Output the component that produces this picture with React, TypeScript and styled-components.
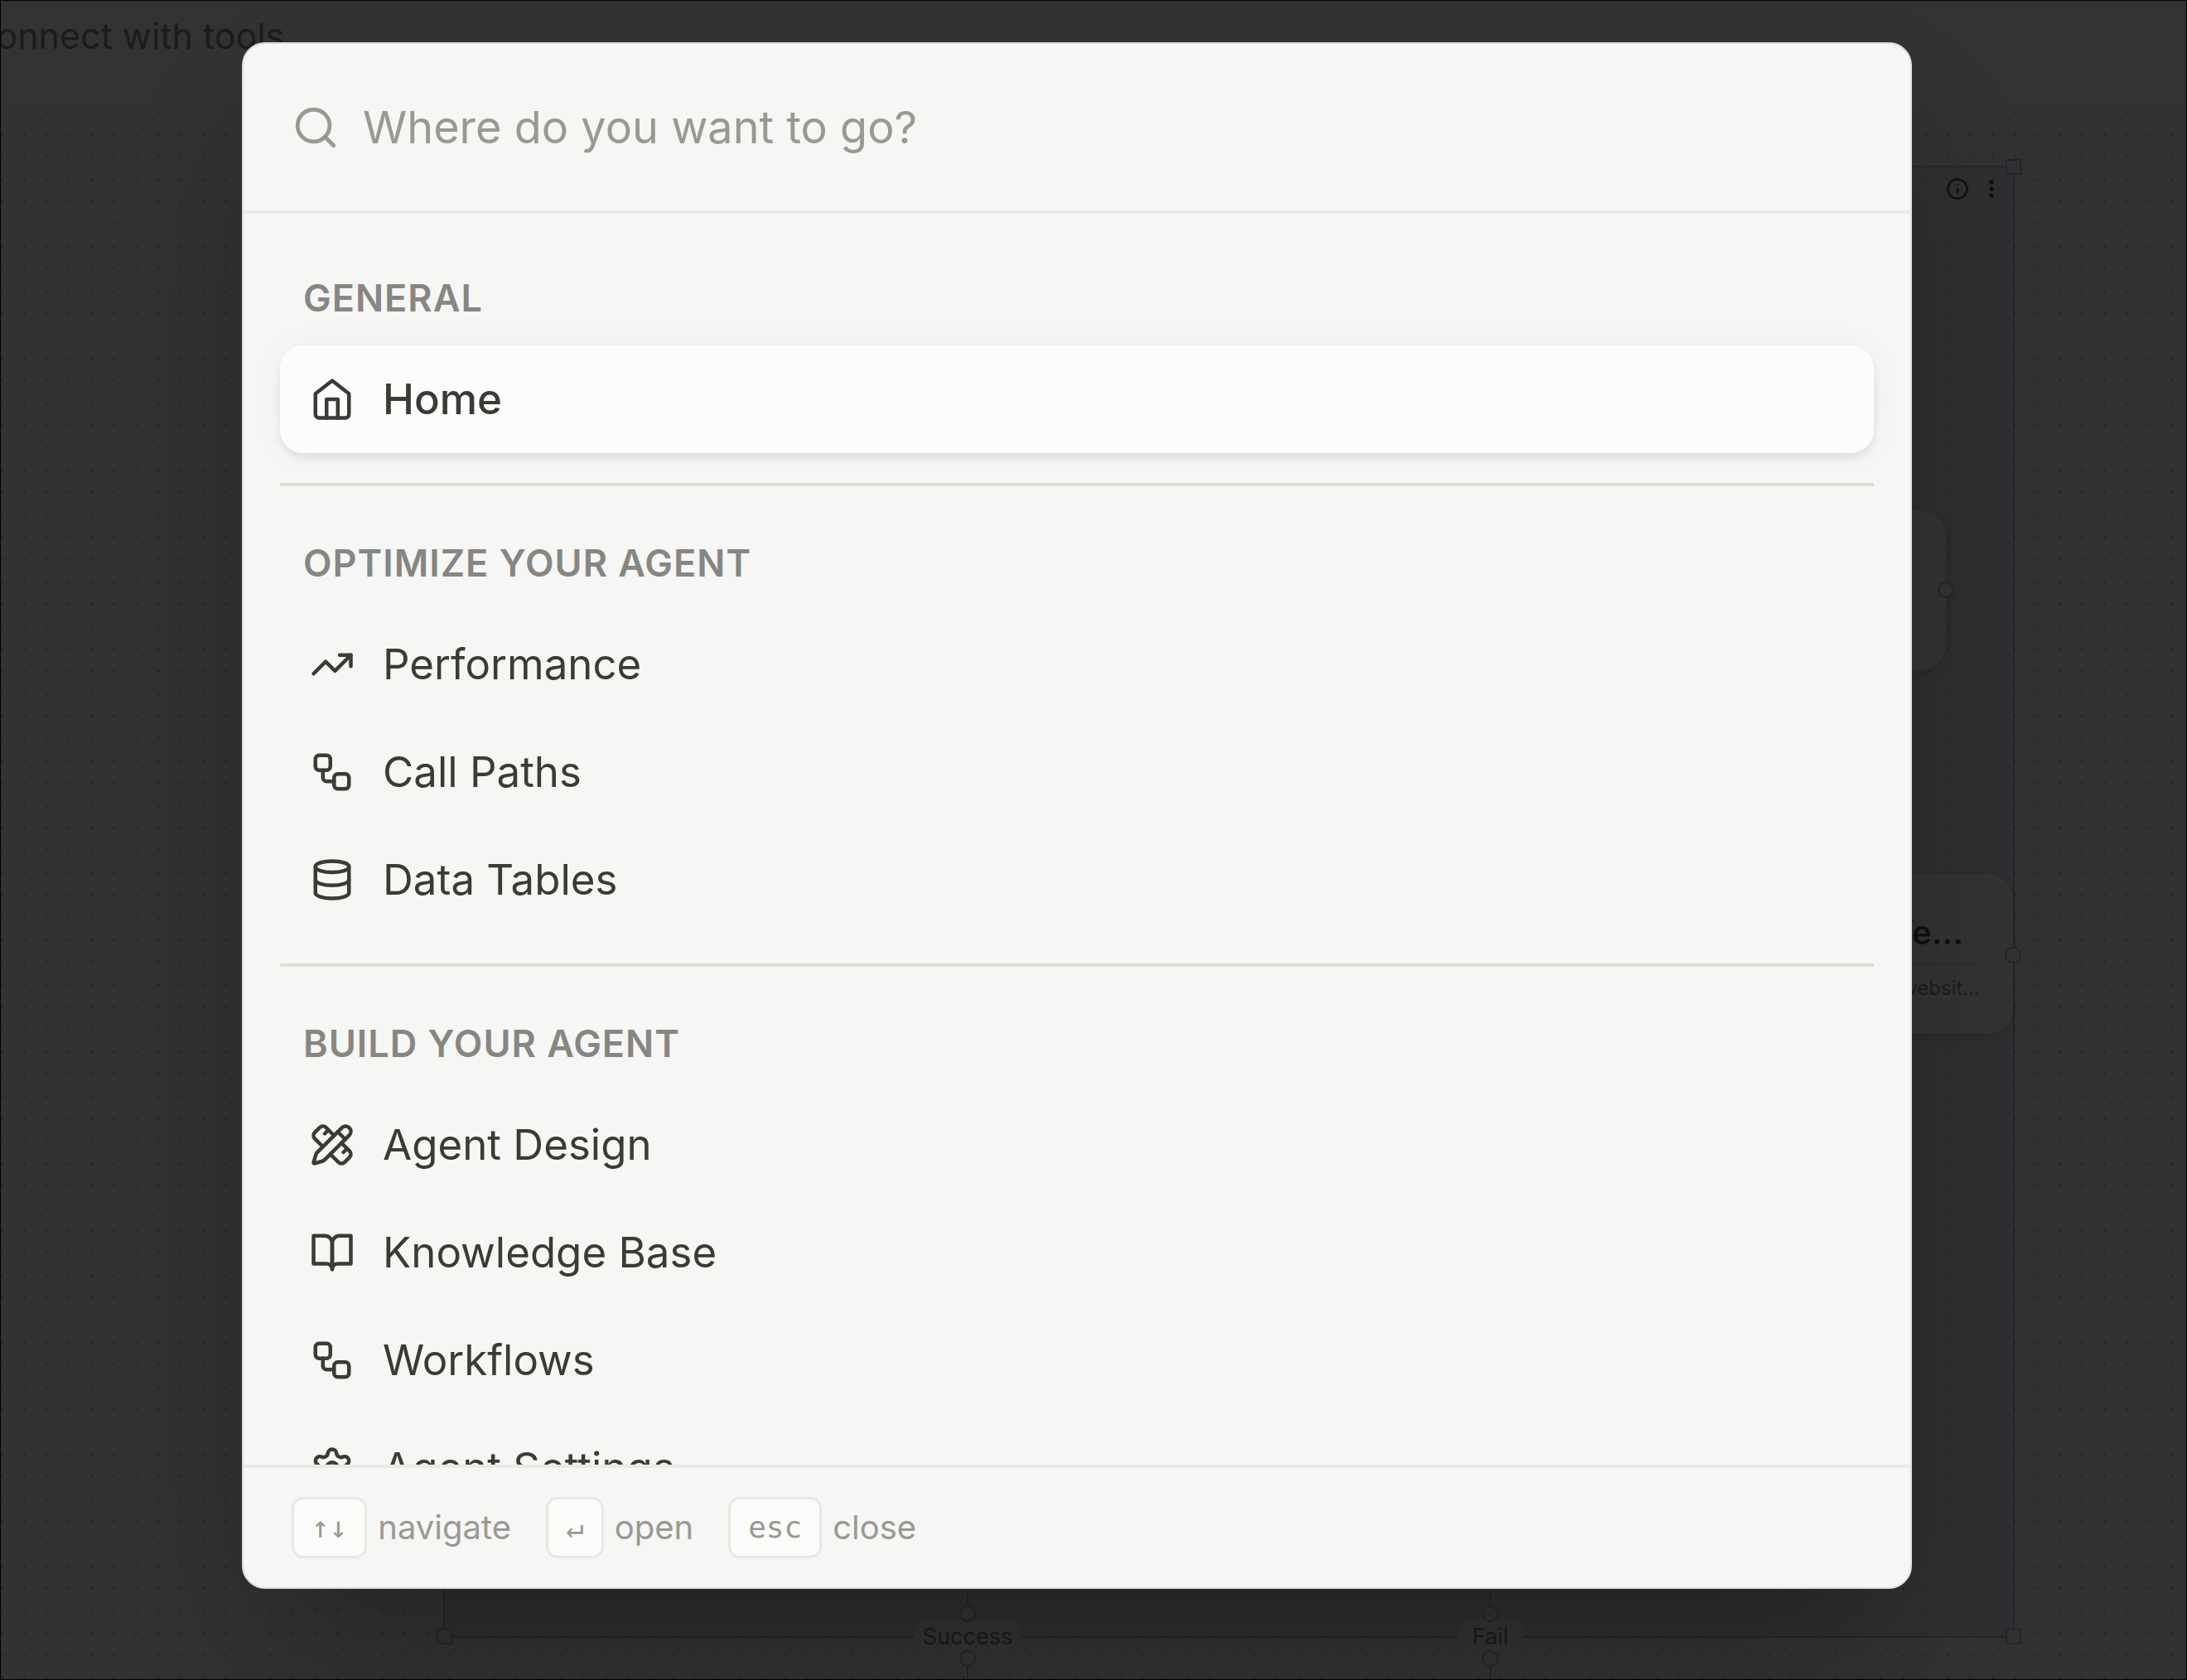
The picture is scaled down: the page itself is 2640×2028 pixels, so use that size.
import React from "react";
import styled, { createGlobalStyle, css } from "styled-components";
import { Database, Info, PencilRuler, Search, Settings, TrendingUp, Workflow } from "lucide-react";

const GlobalStyle = createGlobalStyle`
  *, *::before, *::after { box-sizing: border-box; }
  html, body { margin: 0; background: #323232; }
  body { font-family: Inter, "Liberation Sans", sans-serif; -webkit-font-smoothing: antialiased; }
  button, input { font: inherit; color: inherit; }
`;

const line = "#22262f";
const wire = "#242727";
const hairline = "#e9e9e7";

/* ---------- dimmed editor behind the palette ---------- */

const Screen = styled.div`
  position: relative;
  display: flex;
  flex-direction: column;
  height: 100vh;
  overflow: hidden;
  border: 1px solid #000;
`;

const TopBar = styled.header`
  display: flex;
  align-items: flex-start;
  height: 126px;
  padding-top: 16px;
  background: #333333;
  color: #1d1b1b;
  font-size: 43px;
  line-height: 52px;
  white-space: nowrap;
`;

const TopBarTitle = styled.span`
  margin-left: -37px;
`;

const Canvas = styled.main`
  position: relative;
  flex: 1;
  background-color: #323232;
  background-image: radial-gradient(circle at center, #272727 1px, transparent 2px);
  background-size: 27px 27px;
  background-position: 15px -5px;
`;

const GroupNode = styled.section`
  position: absolute;
  left: 534px;
  top: 73px;
  width: 1897px;
  height: 1777px;
  border: 2px solid ${line};
  background: rgba(46, 42, 46, 0.5);
`;

const ResizeHandle = styled.span<{ $v: "top" | "bottom"; $h: "left" | "right" }>`
  position: absolute;
  ${(p) => p.$v}: -10px;
  ${(p) => p.$h}: -10px;
  width: 19px;
  height: 19px;
  border: 2px solid ${line};
  background: #323232;
`;

const GroupTools = styled.div`
  display: flex;
  justify-content: flex-end;
  gap: 9px;
  padding: 10px 10px 0 0;
  color: #0f0f0f;
`;

const ToolButton = styled.button`
  display: grid;
  place-items: center;
  width: 32px;
  height: 32px;
  padding: 0;
  border: 0;
  background: none;
`;

const Card = styled.article<{ $x: number; $y: number }>`
  position: absolute;
  left: ${(p) => p.$x}px;
  top: ${(p) => p.$y}px;
  width: 540px;
  height: 193px;
  padding: 55px 38px 0;
  border-radius: 30px;
  background: #323332;
  box-shadow: 0 4px 10px rgba(0, 0, 0, 0.12);
  text-align: right;
`;

const CardTitle = styled.h3`
  margin: 0;
  padding: 0 22px 21px 0;
  border-bottom: 2px solid #2e2e2e;
  color: #111111;
  font-size: 40px;
  line-height: 32px;
  font-weight: 600;
`;

const CardText = styled.p`
  margin: 0;
  padding: 12px 2px 0 0;
  color: #1d1d1d;
  font-size: 24px;
  line-height: 32px;
`;

const Port = styled.span<{ $x: number; $y: number }>`
  position: absolute;
  left: ${(p) => p.$x - 10}px;
  top: ${(p) => p.$y - 10}px;
  width: 20px;
  height: 20px;
  border: 2px solid ${wire};
  border-radius: 50%;
  background: #323332;
`;

const Wire = styled.span<{ $x: number; $y: number; $h: number }>`
  position: absolute;
  left: ${(p) => p.$x - 1}px;
  top: ${(p) => p.$y}px;
  width: 2px;
  height: ${(p) => p.$h}px;
  background: ${wire};
`;

const ExitLabel = styled.span<{ $x: number; $y: number }>`
  position: absolute;
  left: ${(p) => p.$x}px;
  top: ${(p) => p.$y}px;
  transform: translate(-50%, -50%);
  min-width: 80px;
  padding: 0 10px;
  border-radius: 16px;
  background: #313231;
  color: #1a1a1a;
  font-size: 27px;
  line-height: 44px;
  text-align: center;
`;

/* ---------- command palette ---------- */

const Overlay = styled.div`
  position: absolute;
  inset: -1px;
  display: flex;
  padding: 51px 332px 110px 292px;
`;

const Palette = styled.div`
  display: flex;
  flex-direction: column;
  flex: 1;
  min-width: 0;
  overflow: hidden;
  border: 2px solid #dedcd8;
  border-radius: 28px;
  background: #f6f6f4;
  box-shadow: 0 86px 172px -42px rgba(0, 0, 0, 0.3);
`;

const SearchRow = styled.label`
  display: flex;
  align-items: center;
  gap: 28px;
  padding: 66px 58px 65px;
  border-bottom: 4px solid ${hairline};
  color: #999993;
`;

const SearchInput = styled.input`
  flex: 1;
  height: 70px;
  padding: 0;
  border: 0;
  outline: 0;
  background: none;
  color: #3d3a35;
  font-size: 54px;
  line-height: 70px;

  &::placeholder { color: #999993; opacity: 1; }
`;

const List = styled.nav`
  flex: 1;
  min-height: 0;
  overflow-y: auto;
  scrollbar-width: none;
  padding: 9px 0;
`;

const Group = styled.section`
  overflow: hidden;
  padding: 14px 44px;
  margin: 22px 0;
`;

const Heading = styled.h2`
  margin: 0;
  padding: 27px 28px;
  color: #868683;
  font-size: 45px;
  line-height: 60px;
  font-weight: 600;
  letter-spacing: 1px;
  text-transform: uppercase;
`;

const Divider = styled.hr`
  height: 4px;
  margin: 0 44px;
  border: 0;
  background: #dfddd6;
`;

const Item = styled.button<{ $active?: boolean }>`
  display: flex;
  align-items: center;
  gap: 34px;
  width: 100%;
  height: 130px;
  padding: 0 36px;
  border: 0;
  border-radius: 28px;
  background: none;
  color: #3d3a35;
  font-size: 51px;
  line-height: 64px;
  text-align: left;

  ${(p) =>
    p.$active &&
    css`
      background: #fcfcfc;
      font-weight: 500;
      box-shadow: 0 6px 10px rgba(0, 0, 0, 0.08), 0 2px 40px rgba(0, 0, 0, 0.04);
    `}
`;

const Footer = styled.footer`
  display: flex;
  align-items: center;
  gap: 42px;
  padding: 35px 58px;
  border-top: 4px solid ${hairline};
  color: #999993;
  font-size: 40px;
  line-height: 52px;
`;

const Hint = styled.span`
  display: flex;
  align-items: center;
  gap: 13px;
`;

const Key = styled.kbd`
  padding: 0 21px;
  border: 3px solid #e8e7e3;
  border-radius: 14px;
  background: #fbfbf9;
  font-family: "DejaVu Sans Mono", "Liberation Mono", monospace;
  font-size: 36px;
  line-height: 68px;
`;

type IconProps = { size?: number };

const Stroked = ({ size = 54, children }: IconProps & { children: React.ReactNode }) => (
  <svg width={size} height={size} viewBox="0 0 24 24" fill="none" stroke="currentColor" strokeWidth={2} strokeLinecap="round" strokeLinejoin="round" aria-hidden="true">
    {children}
  </svg>
);

const HomeIcon = (p: IconProps) => (
  <Stroked {...p}>
    <path d="m3 9 9-7 9 7v11a2 2 0 0 1-2 2H5a2 2 0 0 1-2-2z" />
    <path d="M9 22V12h6v10" />
  </Stroked>
);

const BookIcon = (p: IconProps) => (
  <Stroked {...p}>
    <path d="M2 3h6a4 4 0 0 1 4 4v14a3 3 0 0 0-3-3H2z" />
    <path d="M22 3h-6a4 4 0 0 0-4 4v14a3 3 0 0 1 3-3h7z" />
  </Stroked>
);

const MoreIcon = () => (
  <svg width="32" height="32" viewBox="0 0 32 32" fill="currentColor" aria-hidden="true">
    <circle cx="16" cy="8" r="2.5" />
    <circle cx="16" cy="16" r="2.5" />
    <circle cx="16" cy="24" r="2.5" />
  </svg>
);

const groups: { title: string; items: { label: string; icon: React.ComponentType<IconProps> }[] }[] = [
  { title: "General", items: [{ label: "Home", icon: HomeIcon }] },
  {
    title: "Optimize your agent",
    items: [
      { label: "Performance", icon: TrendingUp },
      { label: "Call Paths", icon: Workflow },
      { label: "Data Tables", icon: Database },
    ],
  },
  {
    title: "Build your agent",
    items: [
      { label: "Agent Design", icon: PencilRuler },
      { label: "Knowledge Base", icon: BookIcon },
      { label: "Workflows", icon: Workflow },
      { label: "Agent Settings", icon: Settings },
    ],
  },
];

const hints = [
  { keys: "↑↓", label: "navigate" },
  { keys: "↵", label: "open" },
  { keys: "esc", label: "close" },
];

const exits = [
  { label: "Success", x: 1167 },
  { label: "Fail", x: 1798 },
];

export default function App() {
  return (
    <>
      <GlobalStyle />
      <Screen>
        <TopBar>
          <TopBarTitle>Connect with tools</TopBarTitle>
        </TopBar>
        <Canvas>
          <GroupNode>
            <GroupTools>
              <ToolButton aria-label="Info"><Info size={28} /></ToolButton>
              <ToolButton aria-label="More"><MoreIcon /></ToolButton>
            </GroupTools>
            <ResizeHandle $v="top" $h="right" />
            <ResizeHandle $v="bottom" $h="left" />
            <ResizeHandle $v="bottom" $h="right" />
          </GroupNode>
          <Card $x={1808} $y={489} />
          <Port $x={2348} $y={585} />
          <Card $x={1889} $y={928}>
            <CardTitle>We...</CardTitle>
            <CardText>websit...</CardText>
          </Card>
          <Port $x={2429} $y={1026} />
          {exits.map((e) => (
            <React.Fragment key={e.label}>
              <Wire $x={e.x} $y={1760} $h={54} />
              <Wire $x={e.x} $y={1880} $h={30} />
              <ExitLabel $x={e.x} $y={1849}>{e.label}</ExitLabel>
              <Port $x={e.x} $y={1821} />
              <Port $x={e.x} $y={1875} />
            </React.Fragment>
          ))}
        </Canvas>

        <Overlay>
          <Palette role="dialog" aria-label="Go to page">
            <SearchRow>
              <Search size={58} strokeWidth={2} aria-hidden="true" />
              <SearchInput type="text" placeholder="Where do you want to go?" aria-label="Where do you want to go?" />
            </SearchRow>
            <List>
              {groups.map((g, gi) => (
                <React.Fragment key={g.title}>
                  {gi > 0 && <Divider />}
                  <Group>
                    <Heading>{g.title}</Heading>
                    {g.items.map(({ label, icon: Icon }) => (
                      <Item key={label} type="button" $active={label === "Home"}>
                        <Icon size={54} />
                        {label}
                      </Item>
                    ))}
                  </Group>
                </React.Fragment>
              ))}
            </List>
            <Footer>
              {hints.map((h) => (
                <Hint key={h.label}>
                  <Key>{h.keys}</Key>
                  {h.label}
                </Hint>
              ))}
            </Footer>
          </Palette>
        </Overlay>
      </Screen>
    </>
  );
}
